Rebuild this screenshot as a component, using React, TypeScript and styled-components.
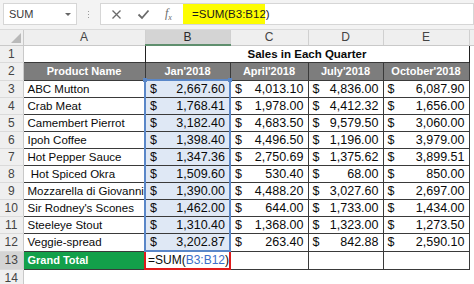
import styled, { createGlobalStyle, css } from "styled-components";

const GlobalStyle = createGlobalStyle`
  html, body {
    margin: 0;
    padding: 0;
    background: #ffffff;
  }
  body {
    font-family: "Liberation Sans", Arial, sans-serif;
    width: 474px;
    height: 284px;
    overflow: hidden;
  }
`;

type Row = [string, string, string, string, string];

const rows: Row[] = [
  ["ABC Mutton", "2,667.60", "4,013.10", "4,836.00", "6,087.90"],
  ["Crab Meat", "1,768.41", "1,978.00", "4,412.32", "1,656.00"],
  ["Camembert Pierrot", "3,182.40", "4,683.50", "9,579.50", "3,060.00"],
  ["Ipoh Coffee", "1,398.40", "4,496.50", "1,196.00", "3,979.00"],
  ["Hot Pepper Sauce", "1,347.36", "2,750.69", "1,375.62", "3,899.51"],
  ["\u00a0Hot Spiced Okra", "1,509.60", "530.40", "68.00", "850.00"],
  ["Mozzarella di Giovanni", "1,390.00", "4,488.20", "3,027.60", "2,697.00"],
  ["Sir Rodney's Scones", "1,462.00", "644.00", "1,733.00", "1,434.00"],
  ["Steeleye Stout", "1,310.40", "1,368.00", "1,323.00", "1,273.50"],
  ["Veggie-spread", "3,202.87", "263.40", "842.88", "2,590.10"],
];

const columns = ["A", "B", "C", "D", "E"];
const colWidths = [23, 122, 85, 78, 75, 86, 5];

export default function App() {
  return (
    <>
      <GlobalStyle />
      <Page>
        {/* Name box + formula bar */}
        <Toolbar>
          <NameBox>
            <span>SUM</span>
            <Caret />
          </NameBox>
          <Grip>
            <i />
            <i />
            <i />
          </Grip>
          <FormulaButtons>
            <svg width="11" height="11" viewBox="0 0 11 11">
              <path d="M1.5 1.5 L9.5 9.5 M9.5 1.5 L1.5 9.5" stroke="#6a6a6a" strokeWidth="1.3" fill="none" />
            </svg>
            <svg width="13" height="11" viewBox="0 0 13 11">
              <path d="M1.5 5.5 L5 9 L11.5 1.5" stroke="#6a6a6a" strokeWidth="1.8" fill="none" />
            </svg>
            <Fx>
              f<sub>x</sub>
            </Fx>
          </FormulaButtons>
          <FormulaInput>
            <FormulaText>=SUM(B3:B12)</FormulaText>
          </FormulaInput>
        </Toolbar>

        {/* Worksheet */}
        <Sheet>
          <colgroup>
            {colWidths.map((w, i) => (
              <col key={i} style={{ width: w }} />
            ))}
          </colgroup>
          <thead>
            <HeadRow>
              <Corner>
                <CornerMark />
              </Corner>
              {columns.map((c) => (
                <ColHead key={c} $active={c === "B"}>
                  {c}
                </ColHead>
              ))}
              <ColHead />
            </HeadRow>
          </thead>
          <tbody>
            <SheetRow>
              <RowHead>1</RowHead>
              <Cell />
              <TitleCell colSpan={4}>Sales in Each Quarter</TitleCell>
              <Cell />
            </SheetRow>
            <SheetRow>
              <RowHead>2</RowHead>
              <HeaderCell>Product Name</HeaderCell>
              <HeaderCell>Jan'2018</HeaderCell>
              <HeaderCell>April'2018</HeaderCell>
              <HeaderCell>July'2018</HeaderCell>
              <HeaderCell>October'2018</HeaderCell>
              <Cell />
            </SheetRow>
            {rows.map((r, i) => (
              <SheetRow key={i}>
                <RowHead>{i + 3}</RowHead>
                <TextCell>{r[0]}</TextCell>
                {r.slice(1).map((v, j) => (
                  <MoneyCell
                    key={j}
                    $picked={j === 0}
                    $first={j === 0 && i === 0}
                    $last={j === 0 && i === rows.length - 1}
                  >
                    <Money>
                      <span>$</span>
                      <span>{v}</span>
                    </Money>
                    {j === 0 && i === 0 && (
                      <>
                        <Handle $side="left" />
                        <Handle $side="right" />
                      </>
                    )}
                  </MoneyCell>
                ))}
                <Cell />
              </SheetRow>
            ))}
            <SheetRow>
              <RowHead $active>13</RowHead>
              <TotalCell>Grand Total</TotalCell>
              <EditCell>
                =SUM(<Ref>B3:B12</Ref>)
              </EditCell>
              <TextCell />
              <TextCell />
              <TextCell />
              <Cell />
            </SheetRow>
            <SheetRow>
              <RowHead>14</RowHead>
              <Cell />
              <Cell />
              <Cell />
              <Cell />
              <Cell />
              <Cell />
            </SheetRow>
          </tbody>
        </Sheet>
      </Page>
    </>
  );
}

const Page = styled.div`
  display: flex;
  flex-direction: column;
  width: 474px;
  height: 284px;
  overflow: hidden;
`;

const Toolbar = styled.div`
  height: 30px;
  flex-shrink: 0;
  box-sizing: border-box;
  display: flex;
  align-items: flex-start;
  padding: 3px 0 0 3px;
  background: #f3f3f3;
  border-bottom: 1px solid #dadada;
`;

const NameBox = styled.div`
  width: 74px;
  height: 22px;
  box-sizing: border-box;
  display: flex;
  align-items: center;
  justify-content: space-between;
  padding: 0 5px 0 5px;
  background: #ffffff;
  border: 1px solid #d6d6d6;
  font-size: 11px;
  color: #3a3a3a;
`;

const Caret = styled.span`
  width: 0;
  height: 0;
  border-left: 3px solid transparent;
  border-right: 3px solid transparent;
  border-top: 3px solid #666666;
`;

const Grip = styled.div`
  width: 23px;
  height: 22px;
  display: flex;
  flex-direction: column;
  align-items: center;
  justify-content: center;
  gap: 2px;

  i {
    width: 1px;
    height: 1px;
    background: #9a9a9a;
  }
`;

const FormulaButtons = styled.div`
  width: 83px;
  height: 22px;
  box-sizing: border-box;
  display: flex;
  align-items: center;
  gap: 15px;
  padding-left: 10px;
  background: #ffffff;
  border: 1px solid #d6d6d6;
  border-right: none;
`;

const Fx = styled.span`
  font-family: "Liberation Serif", serif;
  font-style: italic;
  font-size: 12px;
  color: #6a6a6a;

  sub {
    font-size: 8px;
  }
`;

const FormulaInput = styled.div`
  flex: 1;
  height: 22px;
  box-sizing: border-box;
  display: flex;
  align-items: center;
  background: #ffffff;
  border: 1px solid #d6d6d6;
  border-left: none;
`;

const FormulaText = styled.span`
  height: 20px;
  width: 82px;
  box-sizing: border-box;
  display: flex;
  align-items: center;
  padding-left: 9px;
  background: #fdfd00;
  font-size: 11.5px;
  color: #1a1a1a;
`;

const Sheet = styled.table`
  table-layout: fixed;
  border-collapse: collapse;
  border-spacing: 0;
  width: 474px;
  font-size: 11.5px;
  color: #0a0a0a;
`;

const HeadRow = styled.tr`
  height: 15px;
`;

const SheetRow = styled.tr`
  height: 17px;
`;

const cellBase = css`
  padding: 0;
  height: 16px;
  line-height: 16px;
  white-space: nowrap;
  overflow: hidden;
`;

const headBase = css`
  padding: 0;
  height: 14px;
  line-height: 14px;
  white-space: nowrap;
  overflow: hidden;
`;

const Corner = styled.th`
  ${headBase};
  position: relative;
  background: #efefef;
  border-right: 1px solid #c9c9c9;
  border-bottom: 1px solid #c9c9c9;
`;

const CornerMark = styled.span`
  position: absolute;
  right: 2px;
  bottom: 2px;
  width: 0;
  height: 0;
  border-left: 10px solid transparent;
  border-bottom: 10px solid #b9b9b9;
`;

const ColHead = styled.th<{ $active?: boolean }>`
  ${headBase};
  font-weight: normal;
  font-size: 12px;
  color: ${({ $active }) => ($active ? "#2a2a2a" : "#444444")};
  background: ${({ $active }) => ($active ? "#d4d4d4" : "#efefef")};
  border-right: 1px solid #d0d0d0;
  border-bottom: ${({ $active }) =>
    $active ? "2px solid #5f8f6e" : "1px solid #c9c9c9"};
`;

const RowHead = styled.td<{ $active?: boolean }>`
  ${cellBase};
  text-align: center;
  font-size: 12px;
  color: #444444;
  background: ${({ $active }) => ($active ? "#d4d4d4" : "#efefef")};
  border-right: 1px solid #c9c9c9;
  border-bottom: 1px solid #dadada;
`;

const Cell = styled.td`
  ${cellBase};
`;

const TitleCell = styled.td`
  ${cellBase};
  text-align: center;
  font-weight: bold;
  font-size: 11.5px;
  border-left: 1px solid #222222;
  border-right: 1px solid #222222;
`;

const HeaderCell = styled.td`
  ${cellBase};
  text-align: center;
  font-weight: bold;
  font-size: 11px;
  color: #ffffff;
  background: #7d7d7d;
  border: 1px solid #3a3a3a;
`;

const TextCell = styled.td`
  ${cellBase};
  padding-left: 4px;
  border: 1px solid #3a3a3a;
`;

const MoneyCell = styled.td<{ $picked: boolean; $first: boolean; $last: boolean }>`
  ${cellBase};
  position: relative;
  overflow: visible;
  font-size: 12.5px;
  border: 1px solid #3a3a3a;
  ${({ $picked }) =>
    $picked &&
    css`
      background: #dfe8f5;
      border-left: 2px solid #5a87c8;
      border-right: 2px solid #5a87c8;
    `}
  ${({ $first }) => $first && "border-top: 2px solid #5a87c8;"}
  ${({ $last }) => $last && "border-bottom: 2px solid #5a87c8;"}
`;

const Money = styled.div`
  display: flex;
  justify-content: space-between;
  padding: 0 4px 0 4px;
`;

const Handle = styled.span<{ $side: "left" | "right" }>`
  position: absolute;
  top: -3px;
  ${({ $side }) => ($side === "left" ? "left: -3px;" : "right: -3px;")}
  width: 4px;
  height: 4px;
  background: #5a87c8;
`;

const TotalCell = styled.td`
  ${cellBase};
  padding-left: 4px;
  font-weight: bold;
  font-size: 11px;
  color: #ffffff;
  background: #13a04a;
  border: 1px solid #3a3a3a;
`;

const EditCell = styled.td`
  ${cellBase};
  padding-left: 2px;
  font-size: 12px;
  border: 2px solid #e01b1b;
`;

const Ref = styled.span`
  color: #3c6fc8;
`;
